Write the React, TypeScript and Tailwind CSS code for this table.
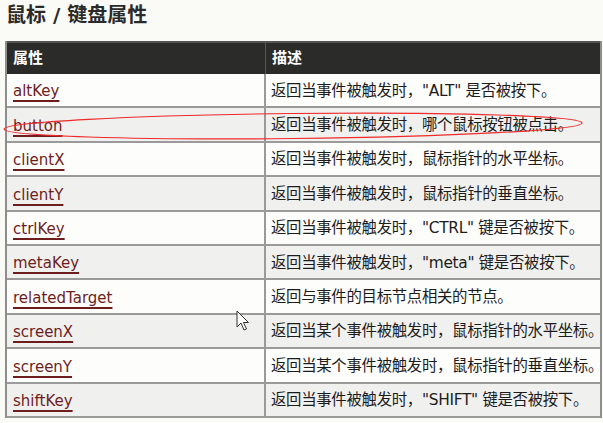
import React from 'react';

const rows = [
  { name: "altKey", desc: '返回当事件被触发时，"ALT" 是否被按下。' },
  { name: "button", desc: "返回当事件被触发时，哪个鼠标按钮被点击。" },
  { name: "clientX", desc: "返回当事件被触发时，鼠标指针的水平坐标。" },
  { name: "clientY", desc: "返回当事件被触发时，鼠标指针的垂直坐标。" },
  { name: "ctrlKey", desc: '返回当事件被触发时，"CTRL" 键是否被按下。' },
  { name: "metaKey", desc: '返回当事件被触发时，"meta" 键是否被按下。' },
  { name: "relatedTarget", desc: "返回与事件的目标节点相关的节点。" },
  { name: "screenX", desc: "返回当某个事件被触发时，鼠标指针的水平坐标。" },
  { name: "screenY", desc: "返回当某个事件被触发时，鼠标指针的垂直坐标。" },
  { name: "shiftKey", desc: '返回当事件被触发时，"SHIFT" 键是否被按下。' },
];

const font = "font-['DejaVu_Sans','Noto_Sans_CJK_SC',sans-serif]";

export default function App() {
  return (
    <div className={`relative w-[603px] h-[423px] overflow-hidden bg-[#fafaf7] ${font} text-[#1c1c1c]`}>
      {/* Title */}
      <h1 className="pl-[6px] pt-[1px] h-[41px] text-[20px] leading-[28px] font-bold text-[#2a2a2a]">
        鼠标 / 键盘属性
      </h1>

      {/* Table */}
      <div className="ml-[5px] w-[597px] border-x-2 border-[#8e8e8e]">
        <div className="flex h-[33px] bg-[#2b2b2a] border-t-2 border-[#555] text-white text-[15px] font-bold items-center">
          <div className="w-[259px] shrink-0 pl-[6px] h-full flex items-center border-r border-[#555]">属性</div>
          <div className="flex-1 pl-[6px]">描述</div>
        </div>
        {rows.map((r, i) => (
          <div
            key={r.name}
            className={`flex h-[34.4px] border-b-2 border-[#9a9a9a] ${i % 2 === 1 ? "bg-[#f0f0ef]" : "bg-[#fdfdfc]"}`}
          >
            <div className="w-[259px] shrink-0 pl-[6px] pt-[3px] flex items-center border-r-2 border-[#9a9a9a] text-[15px]">
              <a className="text-[#6e1d1d] underline decoration-2 decoration-[#6e1d1d] underline-offset-[4px]">
                {r.name}
              </a>
            </div>
            <div className="flex-1 min-w-0 pl-[5px] pt-[2px] flex items-center whitespace-nowrap text-[15.4px] tracking-[-0.3px]">
              {r.desc}
            </div>
          </div>
        ))}
      </div>

      {/* Red annotation ellipse */}
      <svg className="absolute left-0 top-[108px] pointer-events-none" width="603" height="36">
        <ellipse cx="293" cy="18" rx="289" ry="12.5" fill="none" stroke="#ef2a2a" strokeWidth="1.2" transform="rotate(-0.6 293 18)" />
      </svg>

      {/* Mouse cursor */}
      <svg className="absolute left-[236px] top-[310px]" width="14" height="22" viewBox="0 0 14 22">
        <path d="M1 1 L1 17 L5 13 L8 20 L10.5 19 L7.5 12.5 L12.5 12.5 Z" fill="#fff" stroke="#333" strokeWidth="1" strokeLinejoin="round" />
      </svg>
    </div>
  );
}
